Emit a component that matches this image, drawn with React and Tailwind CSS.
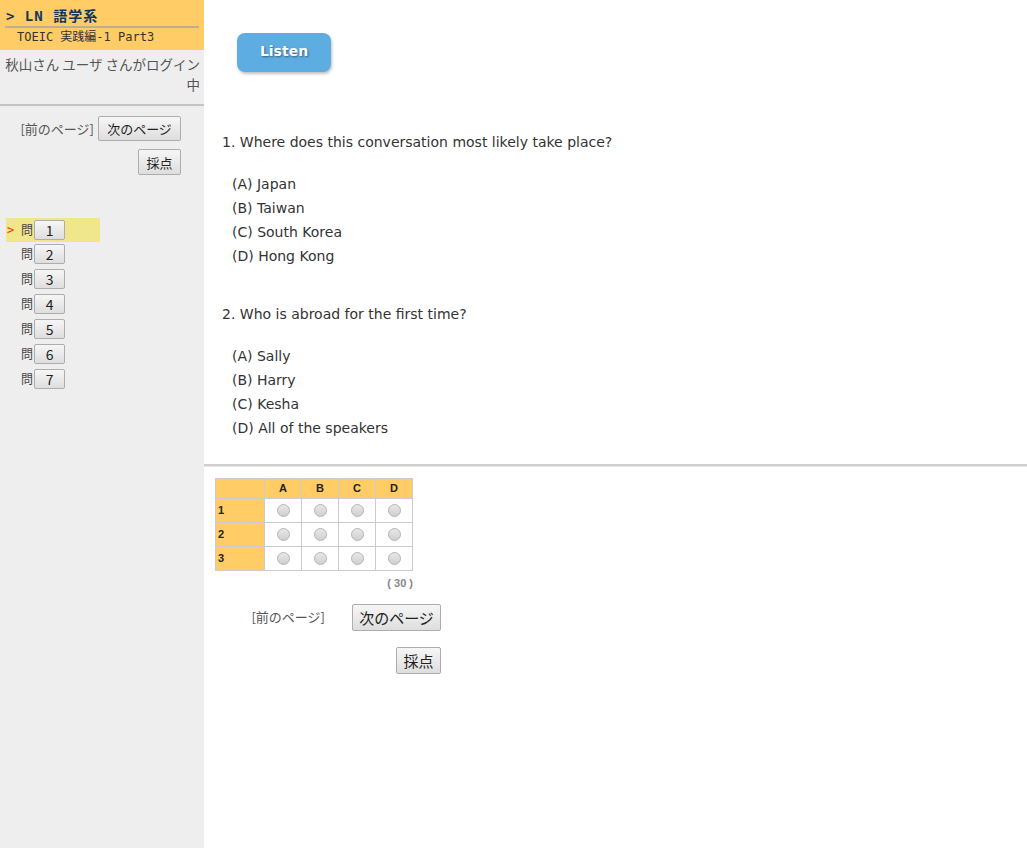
import React from "react";

const mono = { fontFamily: '"DejaVu Sans Mono", "Noto Sans CJK JP", monospace' };
const jp = { fontFamily: '"Noto Sans CJK JP", "DejaVu Sans", sans-serif' };
const verd = { fontFamily: '"DejaVu Sans", "Noto Sans CJK JP", sans-serif' };
const arial = { fontFamily: '"Liberation Sans", Arial, sans-serif' };

function Btn({ children, className = "" }) {
  return (
    <button
      className={
        "border border-[#adadad] rounded-[2px] bg-gradient-to-b from-[#f6f6f6] to-[#dedede] text-[#222] leading-none flex items-center justify-center " +
        className
      }
      style={jp}
    >
      {children}
    </button>
  );
}

function Radio() {
  return (
    <span className="inline-block w-[13px] h-[13px] rounded-full border border-[#b5b5b5] bg-gradient-to-b from-[#e8e8e8] to-[#cfcfcf]" />
  );
}

export default function App() {
  const qs = [
    {
      q: "1. Where does this conversation most likely take place?",
      opts: ["(A) Japan", "(B) Taiwan", "(C) South Korea", "(D) Hong Kong"],
    },
    {
      q: "2. Who is abroad for the first time?",
      opts: ["(A) Sally", "(B) Harry", "(C) Kesha", "(D) All of the speakers"],
    },
  ];
  return (
    <div className="flex min-h-[848px] w-[1027px] bg-white">
      {/* Sidebar */}
      <div className="w-[204px] shrink-0 bg-[#eeeeee] flex flex-col">
        <div className="bg-[#ffcc66] h-[50px] px-[5px] pt-[7px]">
          <div
            className="text-[14px] font-bold text-[#14365e] leading-[18px] pl-[1px] tracking-[1px] border-b-2 border-[#bfae8a] pb-[1px]"
            style={mono}
          >
            &gt; LN 語学系
          </div>
          <div className="text-[12px] text-[#333] leading-[18px] pl-[12px]" style={mono}>
            TOEIC 実践編-1 Part3
          </div>
        </div>
        <div
          className="text-[13.5px] text-[#555] text-right leading-[20px] pt-[4px] pr-[4px] pl-[2px] pb-[10px] border-b-2 border-[#c4c4c4]"
          style={jp}
        >
          秋山さん ユーザ さんがログイン中
        </div>
        <div className="flex flex-col items-end pr-[23px] pt-[10px]">
          <div className="flex items-center gap-[4px]">
            <span className="text-[13px] text-[#555]" style={jp}>[前のページ]</span>
            <Btn className="w-[83px] h-[25px] text-[13px]">次のページ</Btn>
          </div>
          <Btn className="w-[43px] h-[26px] text-[13px] mt-[8px]">採点</Btn>
        </div>
        <div className="pt-[43px] pl-[6px] flex flex-col">
          {[1, 2, 3, 4, 5, 6, 7].map((n) => (
            <div
              key={n}
              className={
                "w-[94px] h-[24px] flex items-center " +
                (n === 1 ? "bg-[#f0e68c]" : n === 2 ? "" : "mt-[1px]")
              }
            >
              <span className="w-[15px] text-[12px] text-[#ff3300] pl-[1px]" style={mono}>
                {n === 1 ? ">" : ""}
              </span>
              <span className="text-[12px] text-[#444]" style={jp}>問</span>
              <Btn className="w-[31px] h-[20px] text-[14px] ml-[1px]">{n}</Btn>
            </div>
          ))}
        </div>
      </div>

      {/* Main */}
      <div className="flex-1 flex flex-col">
        <div className="pl-[33px] pt-[33px]">
          <div
            className="w-[94px] h-[39px] rounded-[8px] bg-[#5dade2] shadow-[1px_2px_3px_rgba(0,0,0,0.25)] flex items-center justify-center text-white font-bold text-[14px] pb-[3px] [text-shadow:1px_1px_2px_rgba(0,0,0,0.45)]"
            style={verd}
          >
            Listen
          </div>
        </div>
        <div className="pl-[18px] pt-[58px] text-[#333]" style={verd}>
          {qs.map((item, i) => (
            <div key={i} className={i === 0 ? "" : "mt-[34px]"}>
              <div className="text-[14px] leading-[24px]">{item.q}</div>
              <div className="pl-[10px] pt-[18px]">
                {item.opts.map((o) => (
                  <div key={o} className="text-[14px] leading-[24px]">{o}</div>
                ))}
              </div>
            </div>
          ))}
        </div>
        <div className="mt-[24px] h-[3px] border-t-2 border-[#cfcfcf] border-b border-b-[#e6e6e6]" />
        <div className="pl-[11px] pt-[11px]" style={arial}>
          <table className="border-collapse text-[11px] font-bold text-[#222]">
            <thead>
              <tr className="h-[20px]">
                <th className="w-[49px] border border-[#cccccc] bg-[#ffcc66]"></th>
                {["A", "B", "C", "D"].map((c) => (
                  <th key={c} className="w-[37px] border border-[#cccccc] bg-[#ffcc66] font-bold">
                    {c}
                  </th>
                ))}
              </tr>
            </thead>
            <tbody>
              {[1, 2, 3].map((r) => (
                <tr key={r} className="h-[24px]">
                  <td className="border border-[#cccccc] bg-[#ffcc66] pl-[2px] text-left">{r}</td>
                  {[0, 1, 2, 3].map((c) => (
                    <td key={c} className="border border-[#cccccc] text-center align-middle">
                      <div className="flex justify-center">
                        <Radio />
                      </div>
                    </td>
                  ))}
                </tr>
              ))}
            </tbody>
          </table>
          <div className="w-[198px] text-right text-[11px] font-bold text-[#888] pt-[4px]">( 30 )</div>
        </div>
        <div className="w-[237px] flex flex-col items-end pt-[12px]">
          <div className="flex items-center gap-[27px]">
            <span className="text-[13px] text-[#555]" style={jp}>[前のページ]</span>
            <Btn className="w-[89px] h-[27px] text-[15px]">次のページ</Btn>
          </div>
          <Btn className="w-[45px] h-[27px] text-[15px] mt-[16px]">採点</Btn>
        </div>
      </div>
    </div>
  );
}
